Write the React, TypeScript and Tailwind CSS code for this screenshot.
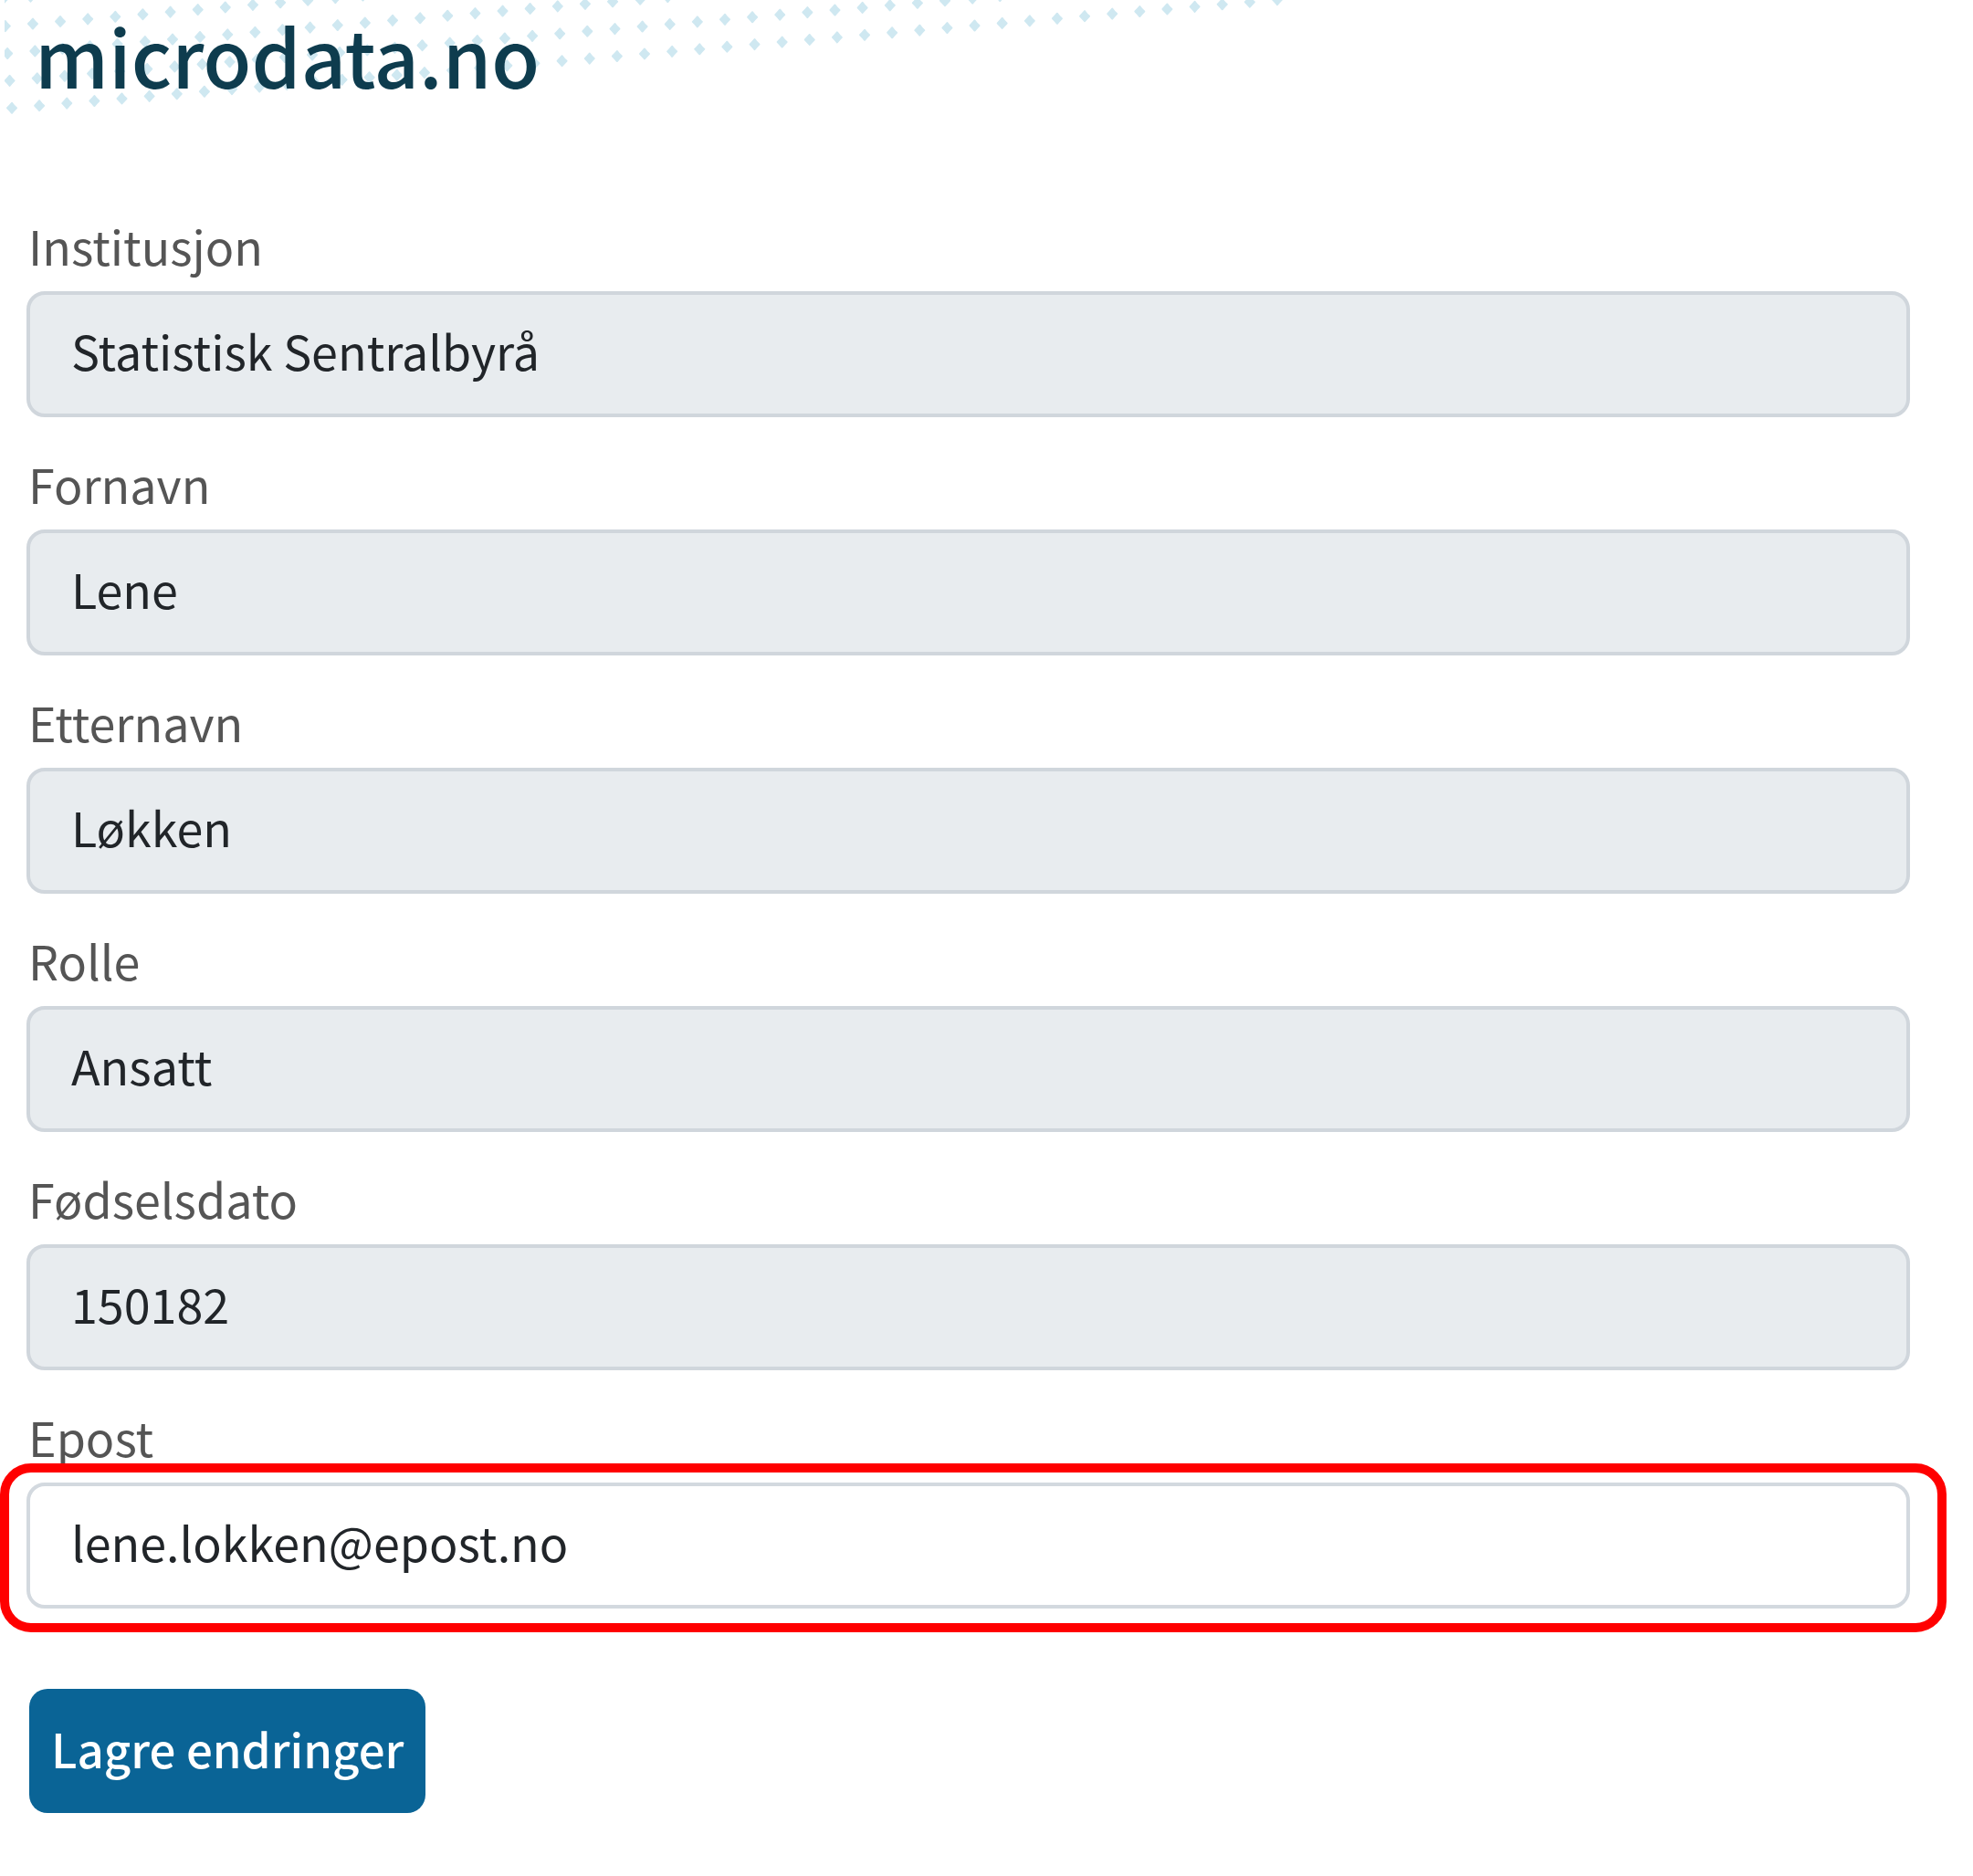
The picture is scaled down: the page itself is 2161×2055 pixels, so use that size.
import React from 'react';

const fields = [
  { id: 'institusjon', label: 'Institusjon', value: 'Statistisk Sentralbyrå' },
  { id: 'fornavn', label: 'Fornavn', value: 'Lene' },
  { id: 'etternavn', label: 'Etternavn', value: 'Løkken' },
  { id: 'rolle', label: 'Rolle', value: 'Ansatt' },
  { id: 'fodselsdato', label: 'Fødselsdato', value: '150182' },
  { id: 'epost', label: 'Epost', value: 'lene.lokken@epost.no', editable: true },
];

// Slightly rotated grid of dots, running out above the top edge
const dots: { x: number; y: number }[] = [];
for (let row = 0; row < 5; row++) {
  for (let col = 0; col < 47; col++) {
    const x = 13 + col * 30.13 - row * 2.4;
    const y = 118.3 - col * 2.58 - row * 29.9;
    if (y > -5) dots.push({ x, y });
  }
}

const DotPattern = () => (
  <svg className="absolute left-0 top-0" width="1450" height="130" viewBox="0 0 1450 130" aria-hidden="true">
    <g fill="#cfe8f1">
      {dots.map(({ x, y }) => (
        <path key={`${x}-${y}`} transform={`translate(${x} ${y})`} d="M0-5.5Q2-2.5 5 0Q2-2.5 5 0Q2.5 2.5 0 5.5Q-2.5 2.5-5 0Q-2.5-2.5 0-5.5Z" stroke="#cfe8f1" strokeWidth="2" strokeLinejoin="round" />
      ))}
    </g>
    <rect width="5" height="130" fill="#fff" />
  </svg>
);

const Field = ({ id, label, value, editable }: any) => (
  <div>
    <label htmlFor={id} className="block pl-[2px] h-[75px] leading-[50px] text-[#555555]">{label}</label>
    <div className="relative">
      <input
        id={id}
        type="text"
        defaultValue={value}
        readOnly={!editable}
        className={
          editable
            ? 'block w-full h-[138px] px-[45px] pb-[10px] rounded-[20px] border-4 border-[#d3d9df] bg-white text-[#212529] outline-none'
            : 'block w-full h-[138px] px-[45px] pb-[10px] rounded-[20px] border-4 border-[#d0d6dc] bg-[#e8ecef] text-[#212529] outline-none'
        }
      />
      {editable && (
        <div className="absolute -left-[29px] -right-[40px] -top-[21px] -bottom-[26px] rounded-[34px] border-[10px] border-[#ff0000] pointer-events-none" />
      )}
    </div>
  </div>
);

const App: React.FC = () => {
  return (
    <div className="relative min-h-screen bg-white font-['Noto_Sans_CJK_JP','Noto_Sans',sans-serif] text-[52px]">
      {/* Header */}
      <DotPattern />
      <header className="relative h-[244px] pl-[38px]">
        <h1 className="text-[86px] leading-[119px] font-medium text-[#0e3c4e]">microdata.no</h1>
      </header>

      {/* Profile form */}
      <form className="pl-[29px] pr-[69px]" onSubmit={(e) => e.preventDefault()}>
        <div className="flex flex-col gap-12">
          {fields.map((field) => (
            <Field key={field.id} {...field} />
          ))}
        </div>
        <button type="submit" className="mt-[88px] ml-[3px] h-[136px] px-[24px] pb-[6px] rounded-[20px] bg-[#0a6496] text-[51px] font-medium text-white">
          Lagre endringer
        </button>
      </form>
    </div>
  );
};

export default App;
